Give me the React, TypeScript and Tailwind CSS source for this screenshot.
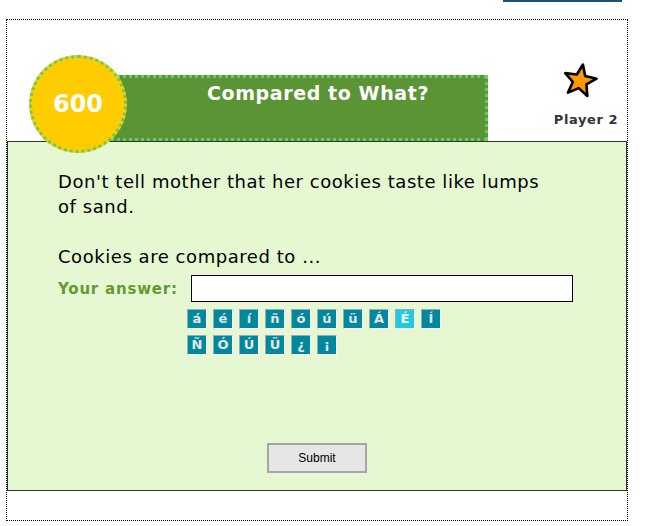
import React from "react";

const accentsRow = ["á", "é", "í", "ñ", "ó", "ú", "ü", "Á", "É", "Í", "Ñ", "Ó", "Ú", "Ü", "¿", "¡"];

function Star() {
  return (
    <svg width="38" height="38" viewBox="0 0 100 100" className="block">
      <polygon
        transform="rotate(10 50 50)"
        points="50,6 61.17,34.63 91.85,36.4 68.07,55.87 75.86,85.6 50,69 24.14,85.6 31.93,55.87 8.15,36.4 38.83,34.63"
        fill="#ff9900"
        stroke="#000"
        strokeWidth="7"
        strokeLinejoin="round"
      />
    </svg>
  );
}

export default function App() {
  return (
    <div className="w-[664px] h-[526px] bg-white overflow-hidden font-['DejaVu_Sans',sans-serif]">
      <div className="h-[19px] flex">
        <a className="ml-[503px] w-[119px] h-[2px] border-b-2 border-[#1f4e79] block" href="#" aria-label="Skip this question"></a>
      </div>
      <div className="ml-[6px] w-[622px] h-[502px] border border-dotted border-black relative flex flex-col">
        {/* header */}
        <div className="h-[121px] flex items-end">
          <div className="ml-[103px] w-[378px] h-[66px] bg-[#5a9434] border-[3px] border-dotted border-[#66cc66] flex justify-center pt-[3px]">
            <span className="text-white font-bold text-[19px] tracking-[0.6px] leading-[24px] ml-[38px]">Compared to What?</span>
          </div>
          <div className="ml-auto mr-[6px] w-[70px] flex flex-col items-center pb-[13px]">
            <div className="-ml-[12px] mb-[12px]">
              <Star />
            </div>
            <span className="text-[#333] font-bold text-[13px] tracking-[0.6px] leading-[16px]">Player 2</span>
          </div>
        </div>
        {/* score circle */}
        <div className="absolute left-[22px] top-[35px] w-[98px] h-[98px] rounded-full bg-[#ffcc00] border-[3px] border-dotted border-[#66cc66] flex items-center justify-center z-10">
          <span className="text-white font-bold text-[24px] leading-none">600</span>
        </div>
        {/* panel */}
        <div className="h-[350px] border border-[#333] bg-[#e5f8d2] pl-[50px] pt-[27px] flex flex-col">
          <p className="w-[495px] text-[18px] tracking-[0.55px] leading-[25px] text-black">
            Don't tell mother that her cookies taste like lumps of sand.
            <br />
            <br />
            Cookies are compared to ...
          </p>
          <div className="flex items-center mt-[6px] h-[27px]">
            <span className="text-[#669933] font-bold text-[15px] tracking-[0.8px] w-[133px] pt-[2px]">Your answer:</span>
            <input className="w-[382px] h-[27px] bg-white border border-black outline-none" />
          </div>
          <div className="ml-[129px] mt-[7px] w-[262px] flex flex-wrap gap-[6px]">
            {accentsRow.map((c, i) => (
              <span
                key={c}
                className={
                  "w-[20px] h-[20px] flex items-center justify-center text-[13px] font-bold border border-t-[#9ab] border-l-[#9ab] border-r-white border-b-white " +
                  (i === 8 ? "bg-[#1ccbdc] text-white" : "bg-[#00889c] text-[#e6e6e6]")
                }
              >
                {c}
              </span>
            ))}
          </div>
          <div className="mt-[88px] -ml-[50px] flex justify-center">
            <button className="w-[100px] h-[30px] bg-[#e6e6e6] border-2 border-[#a6a6a6] text-[12px] text-black font-['Liberation_Sans',sans-serif]">
              Submit
            </button>
          </div>
        </div>
      </div>
    </div>
  );
}
